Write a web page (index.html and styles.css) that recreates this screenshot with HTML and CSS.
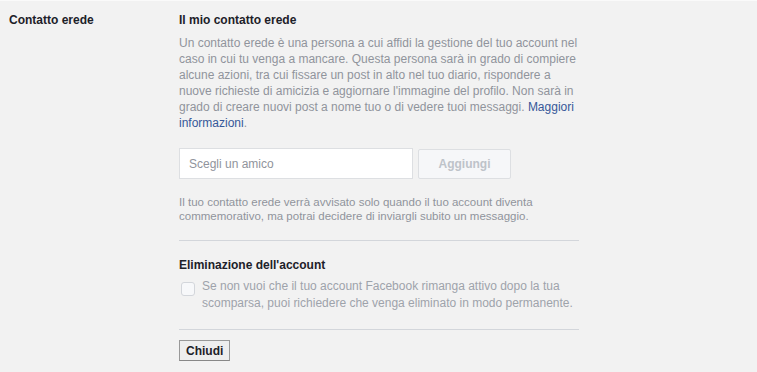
FILE: index.html
```html
<!DOCTYPE html>
<html lang="it">
<head>
  <meta charset="UTF-8" />
  <meta name="viewport" content="width=device-width, initial-scale=1.0" />
  <title>Contatto erede</title>
  <link rel="stylesheet" href="styles.css">
</head>
<body>
  <div class="settings-row">
    <div class="row-label">Contatto erede</div>
    <div class="row-content">
      <h3>Il mio contatto erede</h3>
      <p class="intro">Un contatto erede è una persona a cui affidi la gestione del tuo account nel caso in cui tu venga a mancare. Questa persona sarà in grado di compiere alcune azioni, tra cui fissare un post in alto nel tuo diario, rispondere a nuove richieste di amicizia e aggiornare l'immagine del profilo. Non sarà in grado di creare nuovi post a nome tuo o di vedere tuoi messaggi. <a href="#">Maggiori informazioni</a>.</p>
      <div class="friend-row">
        <input type="text" class="friend-input" placeholder="Scegli un amico">
        <button class="add-btn" disabled>Aggiungi</button>
      </div>
      <p class="note">Il tuo contatto erede verrà avvisato solo quando il tuo account diventa commemorativo, ma potrai decidere di inviargli subito un messaggio.</p>
      <div class="divider"></div>
      <h3 class="delete-title">Eliminazione dell'account</h3>
      <label class="delete-option">
        <input type="checkbox" disabled>
        <span>Se non vuoi che il tuo account Facebook rimanga attivo dopo la tua scomparsa, puoi richiedere che venga eliminato in modo permanente.</span>
      </label>
      <div class="divider"></div>
      <button class="close-btn">Chiudi</button>
    </div>
  </div>
</body>
</html>
```

FILE: styles.css
```css
body { margin: 0; background: #f2f2f2; font-family: 'Liberation Sans', Arial, sans-serif; font-size: 12px; line-height: 16px; color: #1d2129; border-top: 1px solid #fafafa; }
.settings-row { display: grid; grid-template-columns: 170px 400px; padding: 11px 0 0 9px; }
.row-label { font-weight: bold; }
h3 { margin: 0 0 7px; font-size: 12px; font-weight: bold; line-height: 16px; }
.intro { margin: 0; color: #90949c; }
.intro a { color: #365899; text-decoration: none; }
.friend-row { display: flex; align-items: center; gap: 5px; margin-top: 17px; }
.friend-input { width: 234px; height: 31px; box-sizing: border-box; margin: 0; border: 1px solid #dddfe2; background: #fff; padding: 0 9px; font-family: inherit; font-size: 12px; color: #1d2129; }
.friend-input::placeholder { color: #90949c; }
.add-btn { width: 93px; height: 30px; box-sizing: border-box; margin: 0; border: 1px solid #dddfe2; border-radius: 2px; background: #f6f7f9; color: #bec3c9; font-family: inherit; font-size: 12px; font-weight: bold; }
.note { margin: 16px 0 0; font-size: 11.5px; line-height: 14px; color: #90949c; }
.divider { height: 1px; background: #d3d6db; margin-top: 17px; }
.delete-title { margin: 16px 0 5px; }
.delete-option { display: flex; align-items: flex-start; gap: 7px; font-size: 12px; line-height: 17px; color: #9ea3ab; }
.delete-option input { appearance: none; flex: none; width: 14px; height: 14px; margin: 4px 0 0 2px; border: 1px solid #d3d6db; border-radius: 3px; background: #f7f8fa; }
.close-btn { margin-top: 10px; height: 21px; padding: 0 6px; box-sizing: border-box; border: 1px solid #999; border-bottom-color: #888; background: #eee; box-shadow: 0 1px 0 rgba(0,0,0,0.1); color: #1d2129; font-family: inherit; font-size: 12px; font-weight: bold; }
```
